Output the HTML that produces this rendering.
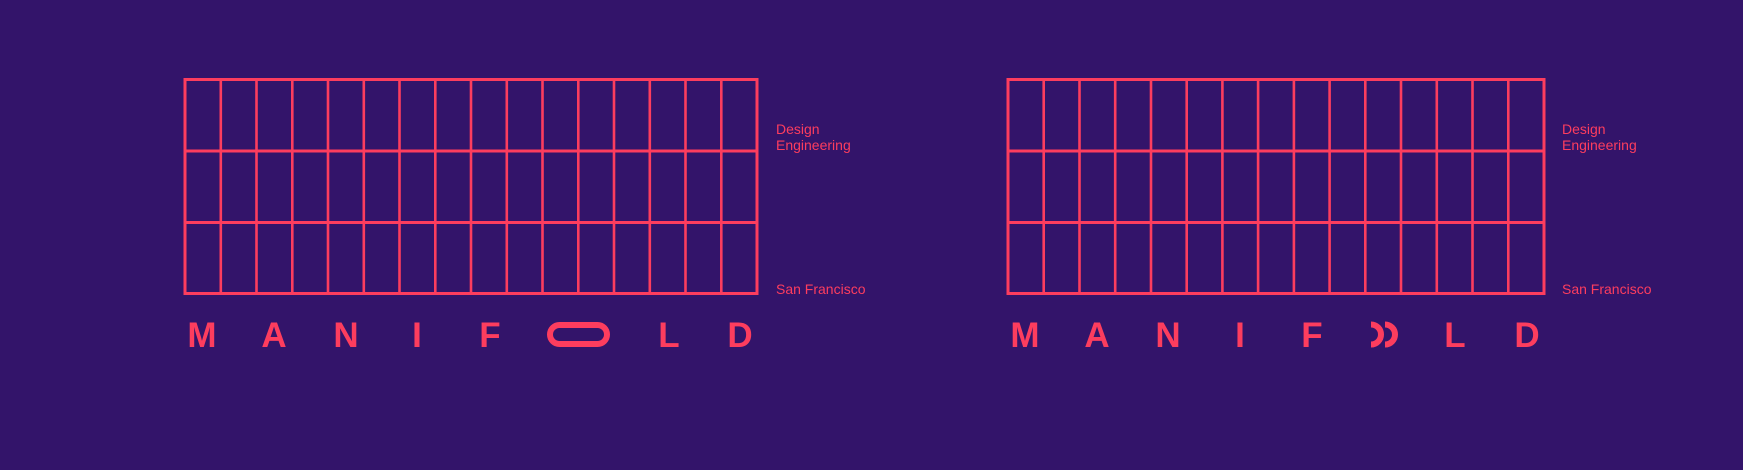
<!DOCTYPE html>
<html><head><style>
html,body{margin:0;padding:0;background:#33146a;width:1743px;height:470px;overflow:hidden}
svg{display:block}
text{font-family:"Liberation Sans",sans-serif;fill:#fd3d5e}
</style></head><body>
<svg width="1743" height="470" viewBox="0 0 1743 470">
<rect width="1743" height="470" fill="#33146a"/>
<g stroke="#fd3d5e" fill="none">
<rect x="185" y="79.5" width="572" height="214" stroke-width="3"/>
<path stroke-width="3" d="M185 151H757M185 222.5H757"/>
<path stroke-width="2.6" d="M220.8 79.5V293.5M256.5 79.5V293.5M292.3 79.5V293.5M328 79.5V293.5M363.8 79.5V293.5M399.5 79.5V293.5M435.3 79.5V293.5M471 79.5V293.5M506.8 79.5V293.5M542.5 79.5V293.5M578.3 79.5V293.5M614 79.5V293.5M649.8 79.5V293.5M685.5 79.5V293.5M721.3 79.5V293.5"/>
<rect x="1008" y="79.5" width="536" height="214" stroke-width="3"/>
<path stroke-width="3" d="M1008 151H1544M1008 222.5H1544"/>
<path stroke-width="2.6" d="M1043.7 79.5V293.5M1079.5 79.5V293.5M1115.2 79.5V293.5M1151 79.5V293.5M1186.7 79.5V293.5M1222.4 79.5V293.5M1258.1 79.5V293.5M1293.9 79.5V293.5M1329.6 79.5V293.5M1365.3 79.5V293.5M1401 79.5V293.5M1436.8 79.5V293.5M1472.5 79.5V293.5M1508.3 79.5V293.5"/>
<rect x="550" y="325" width="57" height="19" rx="9.5" stroke-width="6"/>
<path stroke-width="6" d="M1371 324.5A10 10 0 0 1 1371 344.5M1385 324.5A10 10 0 0 1 1385 344.5"/>
</g>
<g font-size="14">
<text x="776" y="134">Design</text><text x="776" y="150">Engineering</text><text x="776" y="294">San Francisco</text>
<text x="1562" y="134">Design</text><text x="1562" y="150">Engineering</text><text x="1562" y="294">San Francisco</text>
</g>
<g font-size="35" font-weight="bold" text-anchor="middle">
<text x="202" y="347">M</text><text x="274" y="347">A</text><text x="346" y="347">N</text><text x="417" y="347">I</text><text x="490" y="347">F</text><text x="669" y="347">L</text><text x="740" y="347">D</text>
<text x="1025" y="347">M</text><text x="1097" y="347">A</text><text x="1168" y="347">N</text><text x="1240" y="347">I</text><text x="1312" y="347">F</text><text x="1455" y="347">L</text><text x="1527" y="347">D</text>
</g>
</svg>
</body></html>
